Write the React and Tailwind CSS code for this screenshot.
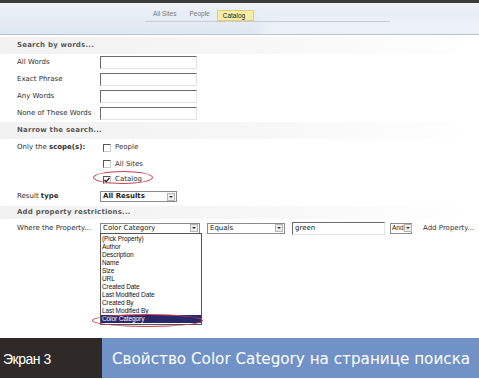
import React from 'react';

const properties = [
  '(Pick Property)',
  'Author',
  'Description',
  'Name',
  'Size',
  'URL',
  'Created Date',
  'Last Modified Date',
  'Created By',
  'Last Modified By',
];

function TextBox({ value = '', className = '' }) {
  return (
    <div
      className={`h-[13px] bg-white border border-t-[#6b6b6b] border-l-[#6b6b6b] border-b-[#e2e2e2] border-r-[#e2e2e2] flex items-center pl-[2px] text-[7px] text-[#222] ${className}`}
    >
      {value}
    </div>
  );
}

function Select({ value, className = '', bold = false }) {
  return (
    <div
      className={`h-[11px] bg-white border border-[#8a8a8a] flex items-center justify-between pl-[2px] ${className}`}
    >
      <span className={`text-[7px] leading-none text-[#222] ${bold ? 'font-bold' : ''}`}>{value}</span>
      <span className="w-[8px] h-[8px] mr-[1px] bg-[#ececec] border border-[#b5b5b5] flex items-center justify-center shrink-0">
        <span className="w-0 h-0 border-l-[2px] border-r-[2px] border-t-[2px] border-l-transparent border-r-transparent border-t-[#333]" />
      </span>
    </div>
  );
}

function Checkbox({ checked }) {
  return (
    <span className="w-[8px] h-[8px] bg-white border border-t-[#555] border-l-[#555] border-b-[#ccc] border-r-[#ccc] flex items-center justify-center">
      {checked && (
        <svg width="6" height="6" viewBox="0 0 6 6">
          <polyline points="0.5,3 2.2,4.8 5.5,0.8" fill="none" stroke="#111" strokeWidth="1.3" />
        </svg>
      )}
    </span>
  );
}

function SectionHeader({ children, className = '' }) {
  return (
    <div className={`flex items-center pl-[17px] bg-gradient-to-r from-[#f2f2f2] via-[#f6f6f6] to-white text-[7px] font-bold text-[#5a5a5a] tracking-[0.2px] ${className}`}>
      {children}
    </div>
  );
}

function Row({ label, children, className = '' }) {
  return (
    <div className={`flex items-center ${className}`}>
      <div className="w-[100px] pl-[17px] text-[7px] text-[#2e2e2e] whitespace-nowrap">{label}</div>
      {children}
    </div>
  );
}

export default function App() {
  return (
    <div
      className="w-[479px] h-[379px] bg-white overflow-hidden flex flex-col"
      style={{ fontFamily: '"DejaVu Sans", Verdana, sans-serif' }}
    >
      {/* top dark strip */}
      <div className="h-[3px] bg-[#3b3b3b]" />

      {/* tab header */}
      <div className="relative h-[32px] bg-gradient-to-b from-[#edf2f8] to-[#dfe7f1] border-b border-[#b7c4d6] overflow-hidden">
        <div className="absolute right-[-40px] top-[16px] w-[260px] h-[30px] rounded-full bg-white/40 blur-[6px]" />
        <div className="relative ml-[145px] mt-[6px] w-[245px] border-b border-[#c3ccd8] flex items-end h-[13px]">
          <span className="ml-[8px] mb-[2px] text-[6.5px] text-[#7a7a7a]" style={{ fontFamily: '"Liberation Sans", Arial, sans-serif' }}>All Sites</span>
          <span className="ml-[13px] mb-[2px] text-[6.5px] text-[#7a7a7a]" style={{ fontFamily: '"Liberation Sans", Arial, sans-serif' }}>People</span>
          <span
            className="ml-[7px] h-[11px] w-[37px] bg-[#f8eda6] border border-[#e2cf78] flex items-center pl-[5px] text-[6.5px] text-[#222]"
            style={{ fontFamily: '"Liberation Sans", Arial, sans-serif' }}
          >
            Catalog
          </span>
        </div>
      </div>

      {/* search form */}
      <div className="h-[303px] pt-[2px] relative">
        <SectionHeader className="h-[17px]">Search by words...</SectionHeader>
        <Row label="All Words" className="h-[17px]"><TextBox className="w-[97px]" /></Row>
        <Row label="Exact Phrase" className="h-[17px]"><TextBox className="w-[97px]" /></Row>
        <Row label="Any Words" className="h-[17px]"><TextBox className="w-[97px]" /></Row>
        <Row label="None of These Words" className="h-[17px]"><TextBox className="w-[97px]" /></Row>
        <SectionHeader className="h-[17px]">Narrow the search...</SectionHeader>
        <Row label={<>Only the <b>scope(s):</b></>} className="h-[17px]">
          <div className="flex items-center gap-[4px] pl-[3px]">
            <Checkbox />
            <span className="text-[7px] text-[#333]">People</span>
          </div>
        </Row>
        <Row label="" className="h-[16px]">
          <div className="flex items-center gap-[4px] pl-[3px]">
            <Checkbox />
            <span className="text-[7px] text-[#333]">All Sites</span>
          </div>
        </Row>
        <Row label="" className="h-[15px]">
          <div className="relative flex items-center gap-[4px] pl-[3px]">
            <Checkbox checked />
            <span className="text-[7px] text-[#333]">Catalog</span>
            <span className="absolute left-[-7px] top-[-3px] w-[60px] h-[13px] rounded-[50%] border border-[#c9404f]" />
          </div>
        </Row>
        <Row label={<>Result <b>type</b></>} className="h-[19px]">
          <Select value="All Results" bold className="w-[77px]" />
        </Row>
        <SectionHeader className="h-[13px]">Add property restrictions...</SectionHeader>
        <Row label="Where the Property..." className="h-[18px]">
          <div className="relative">
            <Select value="Color Category" className="w-[100px]" />
            {/* open dropdown */}
            <div
              className="absolute left-0 top-[10px] w-[102px] bg-white border border-[#555] flex flex-col py-[1px]"
              style={{ fontFamily: '"Liberation Sans", Tahoma, sans-serif' }}
            >
              {properties.map((p) => (
                <div key={p} className="h-[8px] leading-[8px] text-[6.5px] text-[#111] pl-[1px] tracking-[-0.1px]">
                  {p}
                </div>
              ))}
              <div className="h-[8px] leading-[8px] text-[6.5px] text-white bg-[#28286a] pl-[1px] tracking-[-0.1px]">
                Color Category
              </div>
              <span className="absolute left-[-9px] bottom-[-3px] w-[111px] h-[13px] rounded-[50%] border border-[#c9404f]" />
            </div>
          </div>
          <Select value="Equals" className="w-[78px] ml-[7px]" />
          <TextBox value="green" className="w-[93px] ml-[7px]" />
          <div className="ml-[5px] w-[22px] h-[11px] bg-white border border-[#8a8a8a] flex items-center justify-between pl-[1px]">
            <span className="text-[6.5px] leading-none text-[#222]" style={{ fontFamily: '"Liberation Sans", Tahoma, sans-serif' }}>And</span>
            <span className="w-[8px] h-[8px] mr-[1px] bg-[#ececec] border border-[#b5b5b5] flex items-center justify-center shrink-0">
              <span className="w-0 h-0 border-l-[2px] border-r-[2px] border-t-[2px] border-l-transparent border-r-transparent border-t-[#333]" />
            </span>
          </div>
          <span className="ml-[11px] text-[7px] text-[#333] whitespace-nowrap">Add Property...</span>
        </Row>
      </div>

      {/* caption */}
      <div className="h-[40px] flex">
        <div className="w-[102px] bg-[#2f2a28] flex items-center pl-[3px] pt-[2px]">
          <span className="text-[14px] text-white tracking-[-0.5px]" style={{ fontFamily: '"Liberation Sans", Arial, sans-serif' }}>
            Экран 3
          </span>
        </div>
        <div className="flex-1 bg-[#7092c6] flex items-center pl-[10px] pt-[2px]">
          <span className="text-[15.2px] text-white whitespace-nowrap">Свойство Color Category на странице поиска</span>
        </div>
      </div>
    </div>
  );
}
